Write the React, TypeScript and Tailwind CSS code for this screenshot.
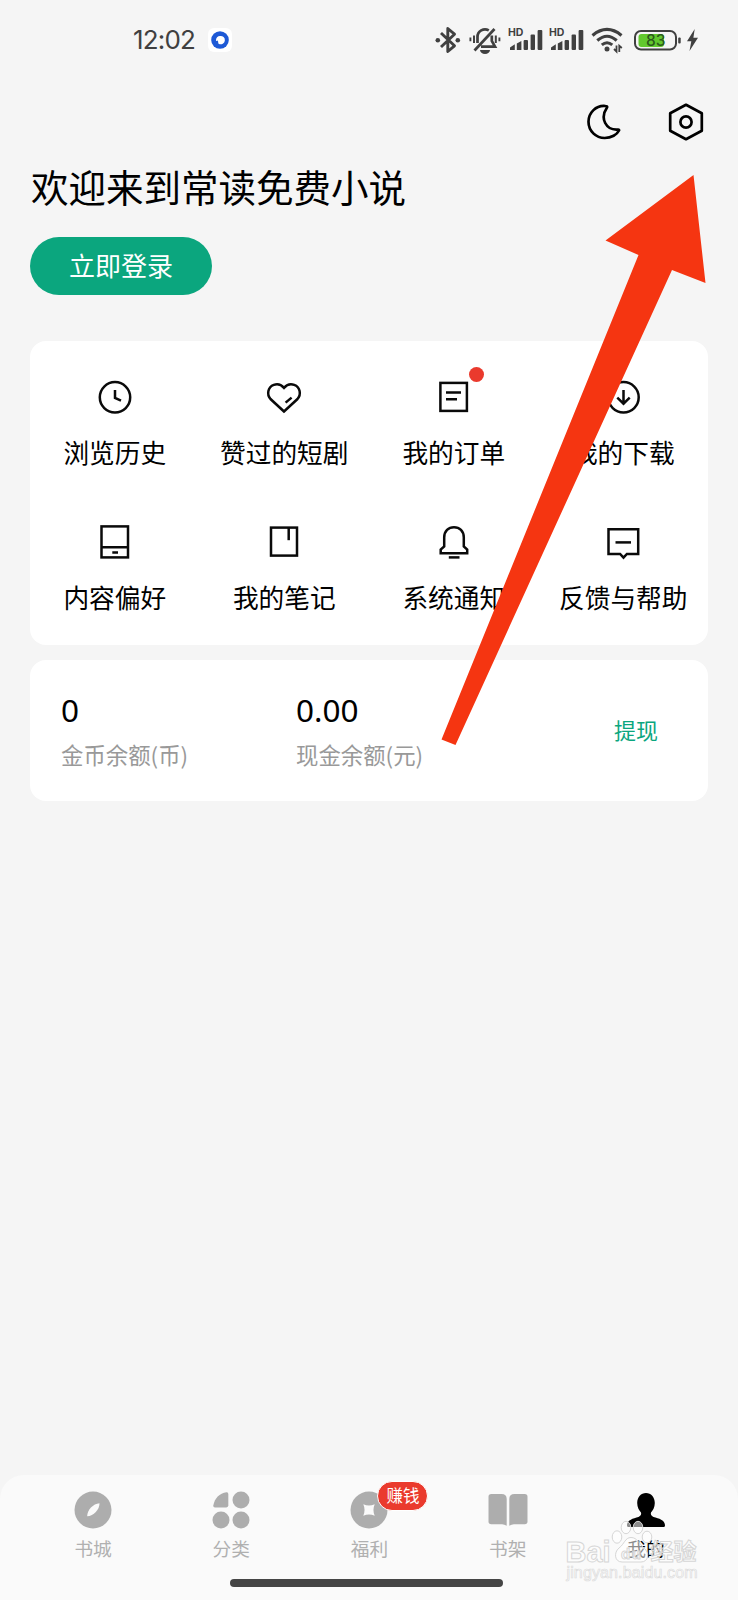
import type { ReactNode } from "react";

type DrawingProps = {
  box: string;
  w: number;
  h: number;
  className?: string;
  children: ReactNode;
};

const Drawing = ({ box, w, h, className, children }: DrawingProps) => (
  <svg viewBox={box} width={w} height={h} className={className} fill="none" stroke="currentColor">
    {children}
  </svg>
);

const Signal = () => (
  <Drawing box="0 0 36 26" w={36} h={26} className="overflow-visible font-['Inter',sans-serif] text-[#404040]">
    <text x="0" y="9" fontSize="10.5" fontWeight="700" fill="currentColor" stroke="none">
      HD
    </text>
    <g fill="currentColor" stroke="none">
      <path d="M2 23V20.5L6.8 17.2V23Z" />
      <path d="M8.8 23V16.5L13.4 14V23Z" />
      <rect x="15.6" y="13" width="4.4" height="10" rx="1" />
      <rect x="22.6" y="7.5" width="4.4" height="15.500" rx="1" />
      <rect x="29.600" y="3" width="4.700" height="20" rx="1" />
    </g>
  </Drawing>
);

const StatusBar = () => (
  <div className="flex h-[80px] items-center justify-between pl-[133px] pr-[39px] text-[#404040]">
    <div className="flex items-center">
      <span className="w-[62px] font-['Inter','Noto_Sans_CJK_SC',sans-serif] text-[26px] leading-[26px] tracking-[-0.8px]">
        12:02
      </span>
      <div className="ml-[13px] flex size-[24px] items-center justify-center rounded-md bg-white">
        <Drawing box="0 0 18 18" w={18} h={18}>
          <circle cx="9" cy="9" r="8.8" fill="#1d59d6" stroke="none" />
          <path d="M9 5A4 4 0 0 0 5 9.3C5.400 10.200 6.500 9.500 7 10.200C7.500 11 6.800 12.500 8 13A4.200 4.200 0 1 0 9 5Z" fill="#fff" stroke="none" />
        </Drawing>
      </div>
    </div>
    <div className="flex items-center">
      <Drawing box="0 0 26 28" w={26} h={28}>
        <path d="M6 7L19.5 19.8L12.8 25.5V2.5L19.5 8.2L6 21" strokeWidth="2.9" strokeLinejoin="round" />
        <circle cx="2.8" cy="14.3" r="2.3" fill="currentColor" stroke="none" />
        <circle cx="22.8" cy="14.3" r="2.3" fill="currentColor" stroke="none" />
      </Drawing>
      <Drawing box="0 0 32 28" w={32} h={28} className="ml-[8px]">
        <path d="M5.5 24.5L25.500 3" strokeWidth="2.7" />
        <path d="M8.5 17V11A7.5 7.5 0 0 1 19.8 4.4" strokeWidth="2.7" />
        <path d="M22.8 9.5V15L26 20.6H12" strokeWidth="2.7" />
        <path d="M11 24H21A5 4 0 0 1 11 24Z" fill="currentColor" stroke="none" />
        <path d="M5 9.5V17M26.8 9.5V17" strokeWidth="2" />
        <path d="M1.4 11.5V15.2M30.4 11.5V15.2" strokeWidth="1.9" />
      </Drawing>
      <div className="ml-[7px] flex gap-[5px]">
        <Signal />
        <Signal />
      </div>
      <Drawing box="0 0 33 28" w={33} h={28} className="ml-[6px]">
        <path d="M1.500 9.4Q16 -2.500 30.500 9.4" strokeWidth="3.2" />
        <path d="M6.3 14.500Q16 6 25.7 14.500" strokeWidth="3.1" />
        <path d="M10.8 18.9Q16 14.500 21.3 18.9" strokeWidth="3" />
        <circle cx="16" cy="23" r="2.500" fill="currentColor" stroke="none" />
        <path d="M25.500 19.500V25.5L23 23M28.300 26V19.700L30.8 22" strokeWidth="1.8" />
      </Drawing>
      <Drawing box="0 0 49 24" w={49} h={24} className="ml-[9px] font-['Inter',sans-serif]">
        <rect x="2" y="3" width="41" height="18.5" rx="6" strokeWidth="2" />
        <rect x="5.500" y="6" width="25.5" height="13" rx="3" fill="#62c92e" stroke="none" />
        <rect x="45.200" y="9.5" width="2.5" height="6" rx="1" fill="currentColor" stroke="none" />
        <text x="13" y="17.600" fontSize="15.500" fontWeight="500" fill="#2c5a1c" stroke="none">
          83
        </text>
      </Drawing>
      <Drawing box="0 0 13 24" w={13} h={24} className="ml-[4px]">
        <path d="M8.7 1L1 13.3H5.3L3.5 23L12 9.8H7.4Z" fill="currentColor" stroke="none" />
      </Drawing>
    </div>
  </div>
);

const entries = [
  {
    label: "浏览历史",
    icon: (
      <>
        <circle cx="18" cy="18.3" r="15.2" />
        <path d="M18 11V19L24 21.6" />
      </>
    ),
  },
  {
    label: "赞过的短剧",
    icon: (
      <>
        <path d="M18 32.5L4.5 20C0.5 15.5 1.8 8 7.8 5.9C11.8 4.5 15.5 6 18 8.8C20.5 6 24.2 4.5 28.2 5.9C34.2 8 35.5 15.5 31.5 20Z" />
        <path d="M19.6 23.6L25.6 18.6" />
      </>
    ),
  },
  {
    label: "我的订单",
    dot: true,
    icon: (
      <>
        <rect x="4.4" y="3.9" width="26.500" height="28" />
        <path d="M10 13.5H25M10 20.2H21" />
      </>
    ),
  },
  {
    label: "我的下载",
    icon: (
      <>
        <circle cx="18.500" cy="18.3" r="15.2" />
        <path d="M18.500 11V25M12.3 18.6L18.500 24.7L24.7 18.6" />
      </>
    ),
  },
  {
    label: "内容偏好",
    icon: (
      <>
        <rect x="4.5" y="2.4" width="26.5" height="31" />
        <path d="M4.5 23.3H31M15.3 28.4H21" />
      </>
    ),
  },
  {
    label: "我的笔记",
    icon: (
      <>
        <rect x="5" y="3.6" width="26" height="28" />
        <path d="M22.7 3.6V16.200" />
      </>
    ),
  },
  {
    label: "系统通知",
    icon: (
      <>
        <path d="M4.700 29.3V25.5L8.200 22.5V13.5C8.200 7 12.5 3.2 18 3.2S27.800 7 27.800 13.5V22.5L31.200 25.5V29.3Z" />
        <path d="M12.8 33.4H23.5" />
      </>
    ),
  },
  {
    label: "反馈与帮助",
    icon: (
      <>
        <path d="M3.500 5.2H33.200V30H21.9L18.500 33.6L15.1 30H3.500Z" />
        <path d="M10.500 18.4H26" />
      </>
    ),
  },
];

const tabs = [
  {
    label: "书城",
    icon: (
      <>
        <circle cx="20" cy="20" r="18.5" />
        <path d="M26.5 13.2C26.7 19.5 20.5 25.8 14.2 26.3C14 20 20.2 13.6 26.5 13.2Z" fill="#fafafa" />
      </>
    ),
  },
  {
    label: "分类",
    icon: (
      <>
        <path d="M2.3 15.5C3.5 8.5 8.5 3.3 15.5 2.3Q17.3 2.1 17.3 4V15.3Q17.3 17.4 15.3 17.4H4Q2 17.4 2.3 15.5Z" />
        <circle cx="30" cy="10" r="8.5" />
        <circle cx="10" cy="30" r="8.5" />
        <circle cx="30" cy="30" r="8.5" />
      </>
    ),
  },
  {
    label: "福利",
    badge: "赚钱",
    icon: (
      <>
        <circle cx="20" cy="20" r="18.5" />
        <path d="M14.3 14.3Q20 16.8 25.7 14.3Q23.2 20 25.7 25.7Q20 23.2 14.3 25.7Q16.8 20 14.3 14.3Z" fill="#fafafa" />
      </>
    ),
  },
  {
    label: "书架",
    icon: (
      <>
        <path d="M3.2 4H13.5Q18.7 4 18.7 9V35.8Q16.5 34.3 14 34.3H3.2Q.5 34.3 .5 31.6V6.7Q.5 4 3.2 4Z" />
        <path d="M36.8 4H26.5Q21.3 4 21.3 9V35.8Q23.5 34.3 26 34.3H36.8Q39.5 34.3 39.5 31.6V6.7Q39.5 4 36.8 4Z" />
      </>
    ),
  },
  {
    label: "我的",
    active: true,
    icon: (
      <path d="M20 3C25 3 28.800 7 28.800 13C28.800 17.500 26.800 20.500 25 22.500C24.300 25.500 26 26.500 29.500 27.500C35.500 29.200 39 31.200 39 35.500Q39 37 37.500 37H2.500Q1 37 1 35.500C1 31.200 4.500 29.200 10.500 27.500C14 26.500 15.700 25.500 15 22.500C13.200 20.500 11.200 17.500 11.200 13C11.200 7 15 3 20 3Z" />
    ),
  },
];

const Watermark = () => (
  <svg
    viewBox="0 0 140 70"
    width="140"
    height="70"
    className="pointer-events-none absolute left-[564px] top-[1520px] font-['Liberation_Sans','Noto_Sans_CJK_SC',sans-serif]"
    fill="#fff"
    fillOpacity="0.55"
    stroke="#d6d6d6"
    strokeWidth="1"
  >
    <text x="1.5" y="41.5" fontSize="30" fontWeight="700" textLength="45" lengthAdjust="spacingAndGlyphs">
      Bai
    </text>
    <ellipse cx="53" cy="17" rx="4.8" ry="6.2" />
    <ellipse cx="62" cy="7.5" rx="4.8" ry="6.2" />
    <ellipse cx="74" cy="7.5" rx="4.8" ry="6.2" />
    <ellipse cx="83" cy="17" rx="4.8" ry="5.8" />
    <path d="M67 17.5C61 17.5 60.5 24 55 28C49.5 32.5 50.5 42 58 42H77C84.5 42 86 33 80 28C75 24 73.5 17.5 67 17.5Z" />
    <text x="57" y="39" fontSize="15" fontWeight="700" textLength="20">
      du
    </text>
    <text x="86.5" y="39.5" fontSize="23" fontWeight="700" textLength="46">
      经验
    </text>
    <text x="2.5" y="58" fontSize="16" textLength="131" strokeWidth="0.7" stroke="#dcdcdc">
      jingyan.baidu.com
    </text>
  </svg>
);

export default function App() {
  return (
    <div className="relative flex h-[1600px] w-[738px] flex-col overflow-hidden bg-[#f5f5f5] font-['Noto_Sans_CJK_SC',sans-serif] text-black">
      <StatusBar />

      <header className="flex h-[83px] items-center justify-end gap-[46px] pr-[34px]">
        <Drawing box="0 0 36 36" w={36} h={36}>
          <path
            d="M19.5 2C10 1 2.5 8.8 2.5 17.8C2.5 27 10 34 18.7 34C25.5 34 31 30.500 33 26.5C33.3 25.7 32.8 25.4 32 25.5C20 26.500 13.500 14.500 21 3.5C21.4 2.7 21 2.1 19.5 2Z"
            strokeWidth="2.7"
            strokeLinejoin="round"
          />
        </Drawing>
        <Drawing box="0 0 36 38" w={36} h={38}>
          <path d="M18 1.8L33.8 10.3V27.7L18 36.2L2.2 27.7V10.3Z" strokeWidth="2.7" strokeLinejoin="round" />
          <circle cx="18" cy="19" r="5.6" strokeWidth="2.7" />
        </Drawing>
      </header>

      <section className="flex flex-col items-start px-[30px]">
        <h1 className="h-[52px] pl-px text-[37.5px] leading-[46px]">欢迎来到常读免费小说</h1>
        <button className="mt-[22px] h-[58px] w-[182px] rounded-full bg-[#0ba67e] pb-[3px] text-[26px] leading-[55px] text-white">
          立即登录
        </button>
      </section>

      <main className="mt-[46px] flex flex-col gap-[15px] px-[30px]">
        <div className="grid h-[304px] grid-cols-4 gap-y-[53px] rounded-2xl bg-white pb-[29px] pt-[38px]">
          {entries.map((entry) => (
            <div key={entry.label} className="flex flex-col items-center">
              <div className="relative">
                <svg width="36" height="36" viewBox="0 0 36 36" fill="none" stroke="#0a0a0a" strokeWidth="2.5">
                  {entry.icon}
                </svg>
                {entry.dot && (
                  <span className="absolute -top-[12px] left-[33px] size-[15px] rounded-full bg-[#ea3a2d]" />
                )}
              </div>
              <span className="mt-[19px] whitespace-nowrap text-[25.7px] leading-[36px]">{entry.label}</span>
            </div>
          ))}
        </div>

        <div className="flex h-[141px] items-center rounded-2xl bg-white pl-[31px] pr-[50px]">
          <div className="w-[235px] pt-[3px]">
            <div className="font-['Noto_Sans',sans-serif] text-[31.5px] leading-[44px]">0</div>
            <div className="text-[22.4px] leading-[44px] text-[#999]">金币余额(币)</div>
          </div>
          <div className="flex-1 pt-[3px]">
            <div className="font-['Noto_Sans',sans-serif] text-[31.5px] leading-[44px]">0.00</div>
            <div className="text-[22.4px] leading-[44px] text-[#999]">现金余额(元)</div>
          </div>
          <span className="pb-[2px] text-[22px] text-[#0ba67e]">提现</span>
        </div>
      </main>

      <nav className="mt-auto flex h-[125px] flex-col rounded-t-[24px] bg-[#fafafa] px-[23px]">
        <div className="grid grid-cols-5 pl-px pt-[15px]">
          {tabs.map((tab) => (
            <div key={tab.label} className="flex flex-col items-center">
              <div className="relative">
                <svg width="40" height="40" viewBox="0 0 40 40" fill={tab.active ? "#000" : "#adadad"}>
                  {tab.icon}
                </svg>
                {tab.badge && (
                  <span className="absolute -top-[9px] left-[28px] flex h-[30px] w-[51px] items-center justify-center rounded-full border border-white bg-[#ea3a2d] pb-[2px] text-[16.5px] leading-none text-white">
                    {tab.badge}
                  </span>
                )}
              </div>
              <span className={tab.active ? "mt-[4px] text-[18.7px] leading-[28px]" : "mt-[4px] text-[18.7px] leading-[28px] text-[#b0b0b0]"}>
                {tab.label}
              </span>
            </div>
          ))}
        </div>
        <div className="ml-[207px] mt-[17px] h-[8px] w-[273px] shrink-0 rounded-full bg-[#454545]" />
      </nav>

      {/* 指向设置按钮的箭头 */}
      <svg className="pointer-events-none absolute left-0 top-0" width="738" height="800" viewBox="0 0 738 800">
        <path d="M693.500 175L705.500 283L672 270L455.500 745L441.500 739.500L638.500 255L605.500 240.500Z" fill="#f53511" />
      </svg>

      <Watermark />
    </div>
  );
}
